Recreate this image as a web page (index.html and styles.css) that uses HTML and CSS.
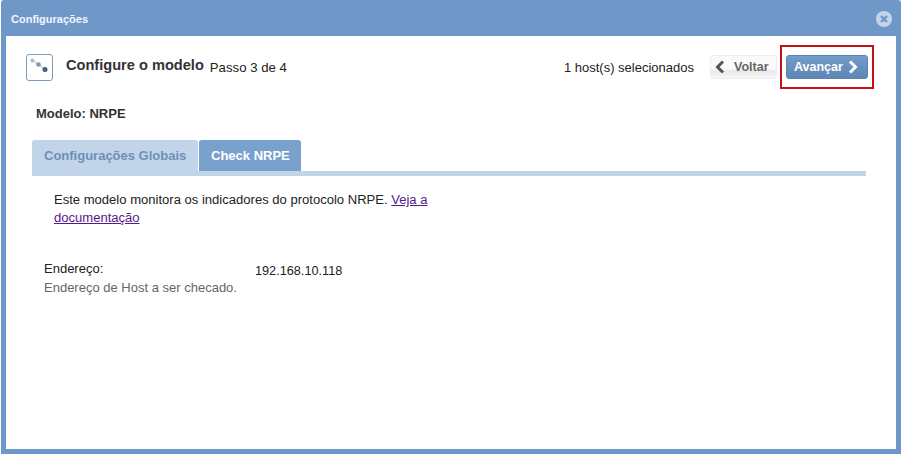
FILE: index.html
```html
<!DOCTYPE html>
<html lang="pt">
<head>
<meta charset="utf-8">
<title>Configurações</title>
<link rel="stylesheet" href="styles.css">
</head>
<body>
<div class="dialog">
  <div class="titlebar">
    <span class="title">Configurações</span>
    <svg class="close" width="16" height="16" viewBox="0 0 16 16"><circle cx="8" cy="8" r="8" fill="#c5d4e8"/><path d="M5 5l6 6M11 5l-6 6" stroke="#6f98c9" stroke-width="2.4"/></svg>
  </div>
  <div class="content">
    <div class="header">
      <span class="icon-box">
        <svg width="25" height="25" viewBox="0 0 25 25"><path d="M5.500 5.500L18 14" stroke="#c3d0e0" stroke-width="1.500"/><circle cx="5.500" cy="5.500" r="2" fill="#a9bdd4"/><circle cx="11.500" cy="9.500" r="2.300" fill="#7d99b8"/><circle cx="18" cy="14.500" r="2.500" fill="#3f5d7e"/></svg>
      </span>
      <span class="heading">Configure o modelo</span>
      <span class="step">Passo 3 de 4</span>
      <span class="hosts">1 host(s) selecionados</span>
      <button class="btn btn-back">
        <svg width="10" height="14" viewBox="0 0 10 14"><path d="M8 1.500L2.500 7L8 12.500" fill="none" stroke="#555" stroke-width="3"/></svg>
        <span>Voltar</span>
      </button>
      <span class="highlight">
        <button class="btn btn-next">
          <span>Avançar</span>
          <svg width="10" height="14" viewBox="0 0 10 14"><path d="M2 1.500L7.500 7L2 12.500" fill="none" stroke="#fff" stroke-width="3"/></svg>
        </button>
      </span>
    </div>
    <div class="model">Modelo: NRPE</div>
    <div class="tabs">
      <span class="tab tab-off">Configurações Globais</span>
      <span class="tab tab-on">Check NRPE</span>
    </div>
    <p class="desc">Este modelo monitora os indicadores do protocolo NRPE. <a href="#">Veja a documentação</a></p>
    <div class="field">
      <div class="field-label">
        <div>Endereço:</div>
        <div class="hint">Endereço de Host a ser checado.</div>
      </div>
      <div class="field-value">192.168.10.118</div>
    </div>
  </div>
</div>
</body>
</html>
```
FILE: styles.css
```css
* { box-sizing: border-box; }
html, body { margin: 0; height: 100%; background: #fff; overflow: hidden; }
body { font-family: "Liberation Sans", Arial, sans-serif; font-size: 13px; color: #222; }
.dialog {
  width: 900px; height: 454px; margin-left: 1px; padding-top: 1px;
  background: #6f98c9; display: flex; flex-direction: column;
  border-radius: 3px 3px 0 0;
}
.titlebar {
  height: 35px; flex: none; display: flex; align-items: center; justify-content: space-between;
  padding: 0 9px 0 10px;
}
.title { font-size: 11px; font-weight: bold; color: #f2f6fb; }
.content {
  margin: 0 5px 5px; flex: 1; background: #fff; padding: 11px 22px 0 20px;
}
.header { display: flex; align-items: center; height: 40px; }
.icon-box {
  width: 27px; height: 27px; border: 1px solid #7d9ab8; border-radius: 3px; flex: none;
  margin-right: 13px; display: flex;
}
.heading { font-size: 14.6px; font-weight: bold; color: #333; margin-right: 6px; position: relative; top: -2px; }
.step { font-size: 13.2px; color: #222; }
.hosts { margin-left: auto; margin-right: 16px; color: #222; }
.btn {
  height: 24px; border-radius: 3px; font: bold 12.5px "Liberation Sans", Arial, sans-serif;
  display: flex; align-items: center; cursor: pointer;
}
.btn-back {
  width: 67px; padding: 0 0 0 4px; gap: 9px; border: 1px solid #eee; color: #666;
  background: linear-gradient(#fafafa 55%, #e9e9e9 70%, #f8f8f8);
}
.highlight {
  margin-left: 3px; padding: 5px 4px; border: 2px solid #c8101c; width: 94px; height: 44px;
  display: flex; align-items: center; justify-content: center;
}
.btn-next {
  width: 83px; padding: 0 0 0 7px; gap: 5px; color: #fff; border: 1px solid #5f84ad;
  background: linear-gradient(#739cca, #5d86b6);
}
.model { font-size: 13px; font-weight: bold; color: #333; margin: 19px 0 0 10px; line-height: 16px; }
.tabs {
  margin: 18px 8px 0 6px; height: 36px; border-bottom: 5px solid #c2d4e8; display: flex; gap: 1px; align-items: flex-end;
}
.tab {
  height: 31px; padding: 0 12px; font-size: 13px; font-weight: bold; display: flex; align-items: center;
  border-radius: 3px 3px 0 0; white-space: nowrap;
}
.tab-off { background: #c2d4e8; color: #6f8fb8; height: 36px; margin-bottom: -5px; padding-bottom: 5px; width: 166px; }
.tab-on { background: #79a1cd; color: #fff; width: 102px; }
.desc { width: 395px; margin: 15px 0 0 28px; line-height: 18px; color: #222; font-size: 13.05px; }
.desc a { color: #551a8b; }
.field { display: flex; margin: 33px 0 0 18px; line-height: 18px; }
.field-label { width: 211px; }
.field-value { padding-top: 2px; font-size: 12.7px; }
.hint { color: #666; margin-top: 1px; }
```
